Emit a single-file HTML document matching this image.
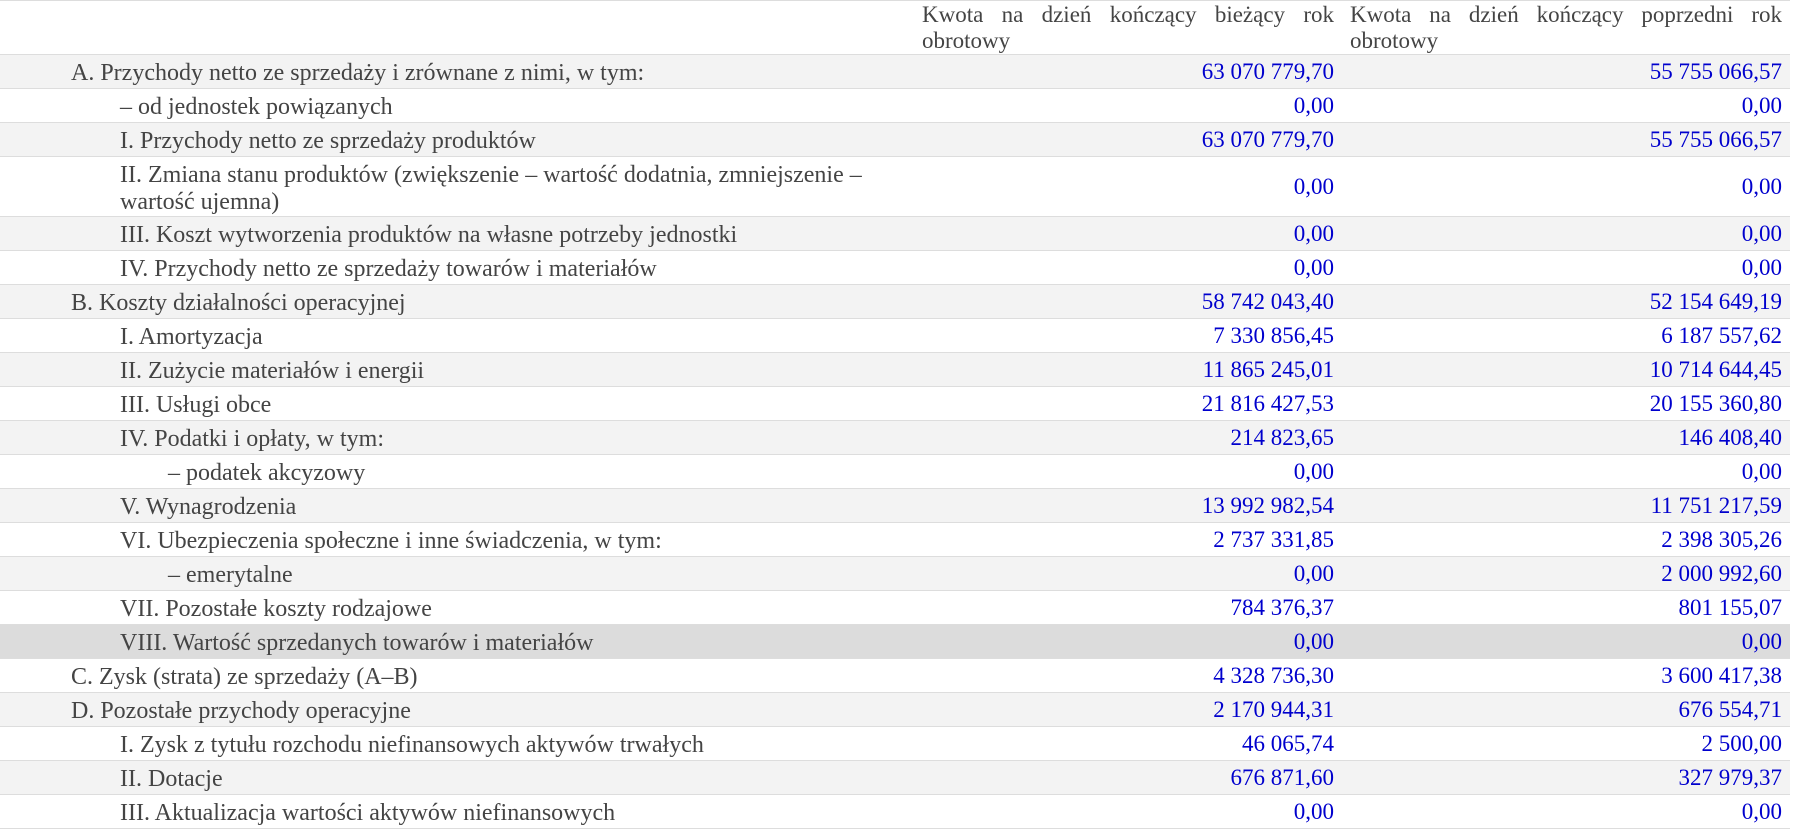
<!DOCTYPE html>
<html><head><meta charset="utf-8"><style>
html,body{margin:0;padding:0;background:#fff;}
body{width:1804px;height:833px;overflow:hidden;font-family:"Liberation Serif",serif;font-size:23px;color:#444;}
.t{position:absolute;left:0;top:0;width:1790px;border-top:1px solid #ddd;}
.r{display:flex;box-sizing:border-box;height:34px;border-bottom:1px solid #ddd;align-items:center;}
.r.s{background:#f3f3f3;}
.r.h{background:#dcdcdc;}
.c1{width:915px;box-sizing:border-box;white-space:nowrap;line-height:27px;font-size:24px;position:relative;top:2px;}
.c2{width:426px;box-sizing:border-box;padding:0 7px;text-align:right;color:#0000cd;}
.c3{width:449px;box-sizing:border-box;padding:0 8px 0 9px;text-align:right;color:#0000cd;}
.l0{padding-left:71px}.l1{padding-left:120px}.l2{padding-left:168px}
.hd{height:54px;align-items:flex-start;}
.hd .c2,.hd .c3{color:#444;text-align:justify;text-align-last:left;line-height:26px;padding-top:1px;}
.dbl{height:60px;}
</style></head><body>
<div class="t">
<div class="r hd"><div class="c1"></div><div class="c2">Kwota na dzień kończący bieżący rok obrotowy</div><div class="c3">Kwota na dzień kończący poprzedni rok obrotowy</div></div>
<div class="r s"><div class="c1 l0">A. Przychody netto ze sprzedaży i zrównane z nimi, w tym:</div><div class="c2">63 070 779,70</div><div class="c3">55 755 066,57</div></div>
<div class="r"><div class="c1 l1">– od jednostek powiązanych</div><div class="c2">0,00</div><div class="c3">0,00</div></div>
<div class="r s"><div class="c1 l1">I. Przychody netto ze sprzedaży produktów</div><div class="c2">63 070 779,70</div><div class="c3">55 755 066,57</div></div>
<div class="r dbl"><div class="c1 l1">II. Zmiana stanu produktów (zwiększenie – wartość dodatnia, zmniejszenie –<br>wartość ujemna)</div><div class="c2">0,00</div><div class="c3">0,00</div></div>
<div class="r s"><div class="c1 l1">III. Koszt wytworzenia produktów na własne potrzeby jednostki</div><div class="c2">0,00</div><div class="c3">0,00</div></div>
<div class="r"><div class="c1 l1">IV. Przychody netto ze sprzedaży towarów i materiałów</div><div class="c2">0,00</div><div class="c3">0,00</div></div>
<div class="r s"><div class="c1 l0">B. Koszty działalności operacyjnej</div><div class="c2">58 742 043,40</div><div class="c3">52 154 649,19</div></div>
<div class="r"><div class="c1 l1">I. Amortyzacja</div><div class="c2">7 330 856,45</div><div class="c3">6 187 557,62</div></div>
<div class="r s"><div class="c1 l1">II. Zużycie materiałów i energii</div><div class="c2">11 865 245,01</div><div class="c3">10 714 644,45</div></div>
<div class="r"><div class="c1 l1">III. Usługi obce</div><div class="c2">21 816 427,53</div><div class="c3">20 155 360,80</div></div>
<div class="r s"><div class="c1 l1">IV. Podatki i opłaty, w tym:</div><div class="c2">214 823,65</div><div class="c3">146 408,40</div></div>
<div class="r"><div class="c1 l2">– podatek akcyzowy</div><div class="c2">0,00</div><div class="c3">0,00</div></div>
<div class="r s"><div class="c1 l1">V. Wynagrodzenia</div><div class="c2">13 992 982,54</div><div class="c3">11 751 217,59</div></div>
<div class="r"><div class="c1 l1">VI. Ubezpieczenia społeczne i inne świadczenia, w tym:</div><div class="c2">2 737 331,85</div><div class="c3">2 398 305,26</div></div>
<div class="r s"><div class="c1 l2">– emerytalne</div><div class="c2">0,00</div><div class="c3">2 000 992,60</div></div>
<div class="r"><div class="c1 l1">VII. Pozostałe koszty rodzajowe</div><div class="c2">784 376,37</div><div class="c3">801 155,07</div></div>
<div class="r h"><div class="c1 l1">VIII. Wartość sprzedanych towarów i materiałów</div><div class="c2">0,00</div><div class="c3">0,00</div></div>
<div class="r"><div class="c1 l0">C. Zysk (strata) ze sprzedaży (A–B)</div><div class="c2">4 328 736,30</div><div class="c3">3 600 417,38</div></div>
<div class="r s"><div class="c1 l0">D. Pozostałe przychody operacyjne</div><div class="c2">2 170 944,31</div><div class="c3">676 554,71</div></div>
<div class="r"><div class="c1 l1">I. Zysk z tytułu rozchodu niefinansowych aktywów trwałych</div><div class="c2">46 065,74</div><div class="c3">2 500,00</div></div>
<div class="r s"><div class="c1 l1">II. Dotacje</div><div class="c2">676 871,60</div><div class="c3">327 979,37</div></div>
<div class="r"><div class="c1 l1">III. Aktualizacja wartości aktywów niefinansowych</div><div class="c2">0,00</div><div class="c3">0,00</div></div>
</div>
</body></html>
